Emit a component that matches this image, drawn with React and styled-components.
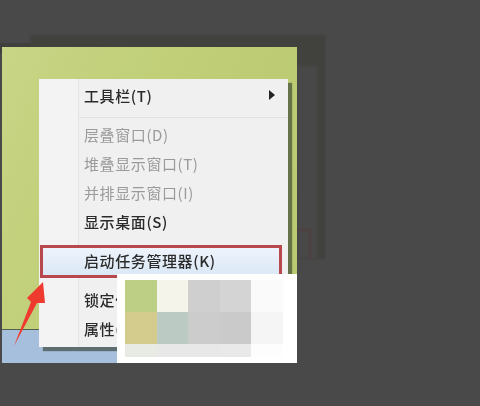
import styled, { createGlobalStyle } from 'styled-components';

const GlobalStyle = createGlobalStyle`
  html, body {
    margin: 0;
    padding: 0;
    background: #494949;
  }
`;

const Page = styled.div`
  position: relative;
  width: 480px;
  height: 406px;
  overflow: hidden;
  padding: 47px 0 0 2px;
  box-sizing: border-box;
  background: #494949;
  font-family: "Noto Sans CJK SC", "Liberation Sans", sans-serif;
`;

// the dim windows behind the bright one
const GhostBack = styled.div`
  position: absolute;
  left: 30px;
  top: 35px;
  width: 295px;
  height: 224px;
  box-sizing: border-box;
  padding: 31px 8px 1px 0;
  display: flex;
  justify-content: flex-end;
  background: #41423e;
  filter: blur(0.8px);
`;

const GhostTop = styled.div`
  position: absolute;
  left: 0;
  top: 43px;
  width: 40px;
  height: 10px;
  background: #40413e;
`;

const GhostInner = styled.div`
  width: 20px;
  display: flex;
  flex-direction: column;
  justify-content: flex-end;
  background: #484848;
`;

const GhostCorner = styled.div`
  width: 12px;
  height: 27px;
  border-top: 2px solid #523c3f;
  border-right: 2px solid #523c3f;
`;

const Desktop = styled.div`
  position: relative;
  width: 295px;
  height: 316px;
  display: flex;
  flex-direction: column;
  filter: blur(0.45px);
`;

const Wallpaper = styled.div`
  height: 283px;
  background: linear-gradient(115deg, #c8d586 0%, #c0cf78 40%, #b9c96f 100%);
  border-bottom: 1px solid #55614a;
  box-sizing: border-box;
`;

const Taskbar = styled.div`
  flex: 1;
  background: #a6bfdc;
`;

const Menu = styled.div`
  position: absolute;
  left: 37px;
  top: 32px;
  width: 249px;
  height: 268px;
  box-sizing: border-box;
  padding: 3px 0;
  background: linear-gradient(to right, #f3f3f3 39px, #e5e5e5 39px, #e5e5e5 40px, #f0f0f0 40px);
  box-shadow: 4px 4px 1px rgba(50, 60, 45, 0.62);
`;

const Row = styled.div`
  height: 29px;
  display: flex;
  align-items: center;
  justify-content: space-between;
  box-sizing: border-box;
  padding: 0 13px 3px 45px;
  font-size: 15px;
  letter-spacing: 0.6px;
  font-weight: ${(p) => (p.$disabled ? 400 : 500)};
  color: ${(p) => (p.$disabled ? '#9a9a9a' : '#2a2a2a')};
`;

const Separator = styled.div`
  height: 1px;
  margin: 6px 0 3px 40px;
  background: #e2e2e2;
`;

const ActiveRow = styled.div`
  width: 242px;
  height: 33px;
  box-sizing: border-box;
  margin: 8px 0 8px 1px;
  padding: 0 0 2px 41px;
  display: flex;
  align-items: center;
  font-size: 15px;
  letter-spacing: 0.6px;
  font-weight: 500;
  color: #2a2a2a;
  border: 3px solid #b9484e;
  background: linear-gradient(to bottom, #eef3fb, #dbe8f6);
`;

const SubArrow = styled.svg`
  width: 6px;
  height: 10px;
  fill: #222;
`;

const Mosaic = styled.div`
  position: absolute;
  left: 115px;
  top: 227px;
  width: 180px;
  height: 89px;
  box-sizing: border-box;
  padding: 6px 14px 6px 8px;
  background: #fff;
  display: grid;
  grid-template-columns: repeat(5, 1fr);
  grid-template-rows: 32px 32px 13px;
`;

const Tile = styled.div`
  background: ${(p) => p.$color};
`;

const Arrow = styled.svg`
  position: absolute;
  left: 10px;
  top: 278px;
  width: 40px;
  height: 72px;
  fill: #ef3a30;
  filter: blur(0.5px);
`;

const tiles = [
  '#bdcf84', '#f4f4ea', '#cfcfcf', '#d4d4d4', '#fafafa',
  '#d3cc8c', '#bccac4', '#cccccc', '#cacaca', '#f5f5f5',
  '#e8ebe4', '#e8e8e8', '#e8e8e8', '#e9e9e9', '#fdfdfd',
];

export default function App() {
  return (
    <Page>
      <GlobalStyle />
      <GhostTop />
      <GhostBack>
        <GhostInner>
          <GhostCorner />
        </GhostInner>
      </GhostBack>
      <Desktop>
        <Wallpaper />
        <Taskbar />
        <Menu>
          <Row>
            工具栏(T)
            <SubArrow viewBox="0 0 6 10">
              <path d="M0 0 L6 5 L0 10 Z" />
            </SubArrow>
          </Row>
          <Separator />
          <Row $disabled>层叠窗口(D)</Row>
          <Row $disabled>堆叠显示窗口(T)</Row>
          <Row $disabled>并排显示窗口(I)</Row>
          <Row>显示桌面(S)</Row>
          <ActiveRow>启动任务管理器(K)</ActiveRow>
          <Row>锁定任务栏(L)</Row>
          <Row>属性(R)</Row>
        </Menu>
        <Mosaic>
          {tiles.map((color, i) => (
            <Tile key={i} $color={color} />
          ))}
        </Mosaic>
      </Desktop>
      <Arrow viewBox="0 0 40 72">
        <path d="M33 4 L17 20 L21 24 L4 68 L27 25 L35 25 Z" />
      </Arrow>
    </Page>
  );
}
